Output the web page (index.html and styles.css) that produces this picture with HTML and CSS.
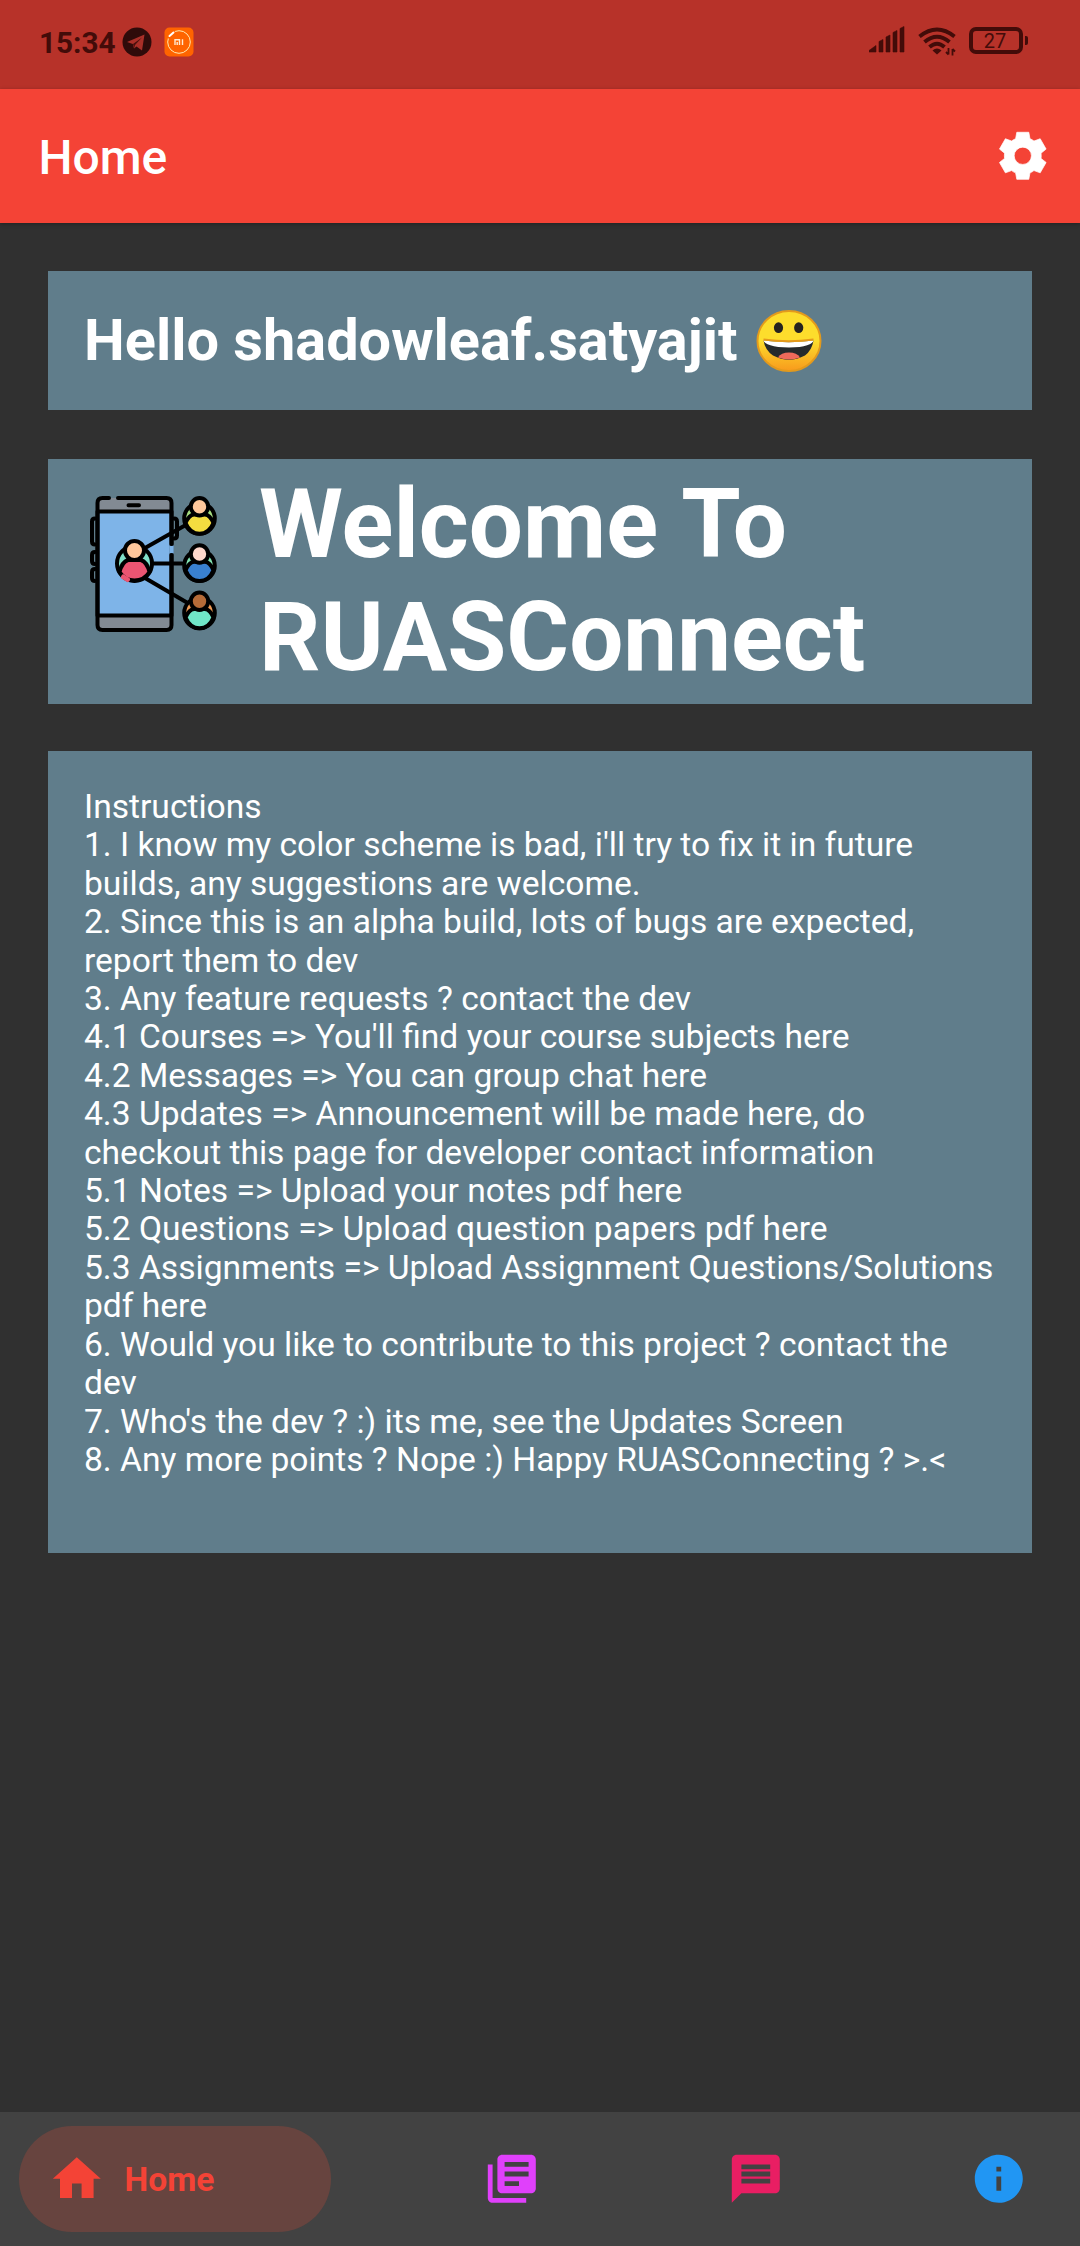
FILE: index.html
```html
<!DOCTYPE html>
<html lang="en">
<head>
<meta charset="utf-8">
<title>RUASConnect</title>
<link rel="stylesheet" href="styles.css">
</head>
<body>
<div class="screen">
  <div class="status">
    <span class="clock">15:34</span>
    <svg class="telegram" width="30" height="30" viewBox="0 0 30 30"><circle cx="15" cy="15" r="14.5" fill="#2f0b0a"/><path d="M5 15 22.500 7.500 20 23.500 14.500 19.500 12 21.500 10.800 17z" fill="#a92f28"/><path d="M11 17 20 10.500 13 18 12.200 21z" fill="#4a100d"/></svg>
    <svg class="mi" width="30" height="30" viewBox="0 0 30 30"><rect x=".5" y=".5" width="29" height="29" rx="5" fill="#ff6400"/><circle cx="15" cy="15" r="11.300" fill="none" stroke="#ffe9b0" stroke-width="1"/><path d="M3.500 10.500 10.500 4" stroke="#ff6400" stroke-width="5"/><path d="M5.500 9 9.500 5.500" stroke="#fff" stroke-width="2" stroke-linecap="round"/><path d="M11 18v-5.300h4.500v5.300M13.200 18v-3M18.500 12.200v5.800" fill="none" stroke="#ffe9d0" stroke-width="1.400"/></svg>
    <span class="spacer"></span>
    <svg class="signal" width="36" height="28" viewBox="0 0 36 28"><path d="M0 26V24.500L7 19.500V26zM10 26V15.500L14 13.500V26zM17 26V11L21 9V26zM24 26V6.500L28 4.500V26zM31 26V2.500L35 .5V26z" fill="#430c09" stroke="#430c09" stroke-width=".6" stroke-linejoin="round"/></svg>
    <svg class="wifi" width="40" height="30" viewBox="0 0 40 30"><g fill="none" stroke="#430c09" stroke-width="3.900"><path d="M1.500 9.500Q19 -4.500 36.500 9.500"/><path d="M6.500 15Q19 4.500 31.500 15"/><path d="M11.500 20Q19 13.500 26.500 20"/></g><path d="M14.500 23.500Q19 19.500 23.500 23.500L19 27.500z" fill="#430c09"/><path d="M30.500 21v6.500M34.500 22v6.500M28 25l2.500 2.500M37 24.500l-2.500-2.500" stroke="#430c09" stroke-width="1.800" fill="none"/></svg>
    <div class="battery"><span class="level">27</span></div>
    <span class="cap"></span>
  </div>

  <header class="appbar">
    <h1 class="title">Home</h1>
    <svg class="icon" viewBox="-12 -12 24 24"><path fill="#fff" fill-rule="evenodd" stroke="#fff" stroke-width=".3" stroke-linejoin="round" d="M-3-7.100-2.500-9.800H2.500L3-7.100Q3.900-6.800 4.650-6.150L7.250-7.100 9.720-2.790 7.600-1.100Q7.750 0 7.600 1.100L9.720 2.790 7.250 7.100 4.650 6.150Q3.900 6.800 3 7.100L2.500 9.800H-2.500L-3 7.100Q-3.900 6.800-4.650 6.150L-7.250 7.100-9.720 2.790-7.600 1.100Q-7.750 0-7.600-1.100L-9.720-2.790-7.250-7.100-4.650-6.150Q-3.900-6.800-3-7.100zM0-3.600A3.600 3.600 0 1 0 0 3.600 3.600 3.600 0 1 0 0-3.600z"/></svg>
  </header>

  <main class="content">
    <section class="card hello">
      <span>Hello shadowleaf.satyajit</span>
      <svg class="emoji" width="66" height="62" viewBox="0 0 66 62">
        <defs><linearGradient id="face" x1="0" y1="0" x2="0" y2="1"><stop offset=".5" stop-color="#fddd2c"/><stop offset="1" stop-color="#f89a1c"/></linearGradient></defs>
        <ellipse cx="33" cy="31" rx="31.500" ry="30" fill="url(#face)" stroke="#e39a1c" stroke-width="2"/>
        <ellipse cx="22.500" cy="17.700" rx="4.600" ry="5.400" fill="#26221f"/><ellipse cx="42.700" cy="17.700" rx="4.600" ry="5.400" fill="#26221f"/>
        <path d="M7.500 30.500Q33 34 57.500 30.500Q56 40 49 45.500Q33 54 17 45.500Q9 40 7.500 30.500z" fill="#262a2c"/>
        <path d="M7.500 30.500Q33 34 57.500 30.500C57 34 49 37.500 33 37.500S8 34 7.500 30.500z" fill="#fff"/>
        <path d="M22 47.500Q25 42.500 33 42.500T44 47.500Q33 51.500 22 47.500z" fill="#ef6a5b"/>
        <path d="M7.500 29.500Q33 33 57.500 29.500" fill="none" stroke="#e59a1b" stroke-width="1.800"/>
      </svg>
    </section>

    <section class="card welcome">
      <svg class="logo" width="128" height="136" viewBox="0 0 128 136" stroke="#000" stroke-width="4" stroke-linecap="round" stroke-linejoin="round">
        <rect x="7.500" y="2" width="74" height="132" rx="5" fill="#828a93" stroke="none"/>
        <path d="M7.500 15.500h74v104h-74z" fill="#7eb4e8"/>
        <path d="M81.500 49.500v8" stroke="#7eb4e8" stroke-linecap="butt" stroke-width="4.500"/>
        <path d="M19 2h-6.500q-5 0-5 5v122q0 5 5 5h64q5 0 5-5V59M81.500 48V7q0-5-5-5H28" fill="none"/>
        <path d="M38.500 9.300h10.500M5 22.500q-3 0-3 3v20q0 3 3 3M5 56q-3 0-3 3v6q0 3 3 3M5 73q-3 0-3 3v6q0 3 3 3M84 22.500q3 0 3 3v14q0 3-3 3" fill="none"/>
        <path d="M55 52 94 30M62 67.500h30M55 82l41 24" fill="none"/>
        <circle cx="44.500" cy="67.500" r="17.500" fill="#80e0c8"/>
        <path d="M29.500 76Q32 66 38 64H51Q57 66 59.500 76Q54 84.500 44.500 84.500T29.500 76z" fill="#ec5572"/>
        <path d="M33.500 81l4 2.500" stroke="#ec5572" stroke-width="5"/>
        <circle cx="44.500" cy="54.500" r="9.500" fill="#ffc79b"/>
        <g><circle cx="109.500" cy="22.500" r="15.300" fill="#a5dc80"/><path d="M95.500 27Q99 19 104 18.500H115Q120 19 123.500 27Q119 37.800 109.500 37.800T95.500 27z" fill="#f4dd40"/><circle cx="109.500" cy="10.700" r="8.700" fill="#ffc79b"/></g>
        <g><circle cx="109.500" cy="69.800" r="15.300" fill="#80e0b0"/><path d="M95.500 74.300Q99 66.300 104 65.800H115Q120 66.300 123.500 74.300Q119 85.100 109.500 85.100T95.500 74.300z" fill="#3980d0"/><circle cx="109.500" cy="58" r="8.700" fill="#ffd8cc"/></g>
        <g><circle cx="109.500" cy="117" r="15.300" fill="#ee9b56"/><path d="M95.500 121.500Q99 113.500 104 113H115Q120 113.500 123.500 121.500Q119 132.300 109.500 132.300T95.500 121.500z" fill="#70e6c8"/><circle cx="109.500" cy="105.200" r="8.700" fill="#b66b38"/></g>
      </svg>
      <h2 class="headline">Welcome To<br>RUASConnect</h2>
    </section>

    <section class="card instructions">
      <p>Instructions</p>
      <p>1. I know my color scheme is bad, i'll try to fix it in future<br>builds, any suggestions are welcome.</p>
      <p>2. Since this is an alpha build, lots of bugs are expected,<br>report them to dev</p>
      <p>3. Any feature requests ? contact the dev</p>
      <p>4.1 Courses =&gt; You'll find your course subjects here</p>
      <p>4.2 Messages =&gt; You can group chat here</p>
      <p>4.3 Updates =&gt; Announcement will be made here, do<br>checkout this page for developer contact information</p>
      <p>5.1 Notes =&gt; Upload your notes pdf here</p>
      <p>5.2 Questions =&gt; Upload question papers pdf here</p>
      <p>5.3 Assignments =&gt; Upload Assignment Questions/Solutions<br>pdf here</p>
      <p>6. Would you like to contribute to this project ? contact the<br>dev</p>
      <p>7. Who's the dev ? :) its me, see the Updates Screen</p>
      <p>8. Any more points ? Nope :) Happy RUASConnecting ? &gt;.&lt;</p>
    </section>
  </main>

  <nav class="tabs">
    <a class="tab active"><svg class="icon" viewBox="0 0 24 24" fill="#f44336"><path d="M10 20v-6h4v6h5v-8h3L12 3 2 12h3v8z"/></svg><span>Home</span></a>
    <a class="tab"><svg class="icon" viewBox="0 0 24 24" fill="#e040fb"><path d="M4 6H2v14c0 1.100.9 2 2 2h14v-2H4V6zm16-4H8c-1.100 0-2 .9-2 2v12c0 1.100.9 2 2 2h12c1.100 0 2-.9 2-2V4c0-1.100-.9-2-2-2zm-1 9H9V9h10v2zm-4 4H9v-2h6v2zm4-8H9V5h10v2z"/></svg></a>
    <a class="tab"><svg class="icon" viewBox="0 0 24 24" fill="#e91e63"><path d="M20 2H4c-1.100 0-1.990.9-1.990 2L2 22l4-4h14c1.100 0 2-.9 2-2V4c0-1.100-.9-2-2-2zm-2 12H6v-2h12v2zm0-3H6V9h12v2zm0-3H6V6h12v2z"/></svg></a>
    <a class="tab"><svg class="icon" viewBox="0 0 24 24" fill="#2196f3"><path d="M12 2C6.480 2 2 6.480 2 12s4.480 10 10 10 10-4.480 10-10S17.520 2 12 2zm1 15h-2v-6h2v6zm0-8h-2V7h2v2z"/></svg></a>
  </nav>
</div>
</body>
</html>
```
FILE: styles.css
```css
* { box-sizing: border-box; }
body { margin: 0; background: #303030; font-family: Roboto, "Liberation Sans", sans-serif; color: #fff; }
h1, h2, p { margin: 0; }
svg { display: block; flex: none; }
.screen { width: 1080px; height: 2246px; display: flex; flex-direction: column; background: #303030; overflow: hidden; }

.status { height: 89px; flex: none; display: flex; align-items: center; padding: 0 52px 6px 39px; background: #b73229; color: #430c09; }
.clock { font-size: 29.7px; font-weight: 700; line-height: 36px; width: 83px; padding-top: 2px; white-space: nowrap; }
.telegram { margin-right: 12px; }
.spacer { flex: 1; }
.signal { margin-right: 13px; margin-top: -3px; }
.wifi { margin-right: 11px; }
.battery { width: 54px; height: 27px; border: 4px solid #430c09; border-radius: 7px; display: flex; align-items: center; justify-content: center; margin-top: -2px; }
.level { font-size: 20px; line-height: 20px; padding-right: 2px; }
.cap { width: 3px; height: 9px; border-radius: 0 2px 2px 0; background: #430c09; margin: -2px 0 0 2px; }

.appbar { height: 134px; flex: none; display: flex; align-items: center; justify-content: space-between; padding: 0 28.6px 0 38.4px; background: #f44336; box-shadow: 0 1px 4px rgba(0, 0, 0, .3); }
.title { font-size: 48px; font-weight: 500; line-height: 56px; padding-top: 3px; }
.icon { width: 57.6px; height: 57.6px; }

.content { flex: 1; padding: 48px 48px 0; display: flex; flex-direction: column; }
.card { background: #607d8b; flex: none; }
.hello { height: 139px; margin-bottom: 49px; padding-left: 36px; display: flex; align-items: center; gap: 18px; font-size: 57.7px; font-weight: 700; line-height: 67px; }
.welcome { height: 245px; margin-bottom: 47px; padding: 9px 0 0 42px; display: flex; gap: 41px; }
.logo { margin-top: 28px; }
.headline { font-size: 96px; font-weight: 700; line-height: 112.800px; word-spacing: 2px; white-space: nowrap; }
.instructions { height: 802px; padding: 37px 36px 0; font-size: 33.6px; line-height: 38.400px; white-space: nowrap; }

.tabs { height: 134px; flex: none; background: #424242; padding: 0 52.4px 0 19px; display: flex; align-items: center; gap: 185.7px; }
.tab { display: flex; align-items: center; }
.active { width: 312px; height: 106px; margin-right: auto; flex: none; border-radius: 53px; background: #67443f; padding-left: 29px; gap: 19px; color: #f44336; font-size: 33.6px; font-weight: 700; }
.tab:nth-child(2) { margin-left: -100px; }
```
